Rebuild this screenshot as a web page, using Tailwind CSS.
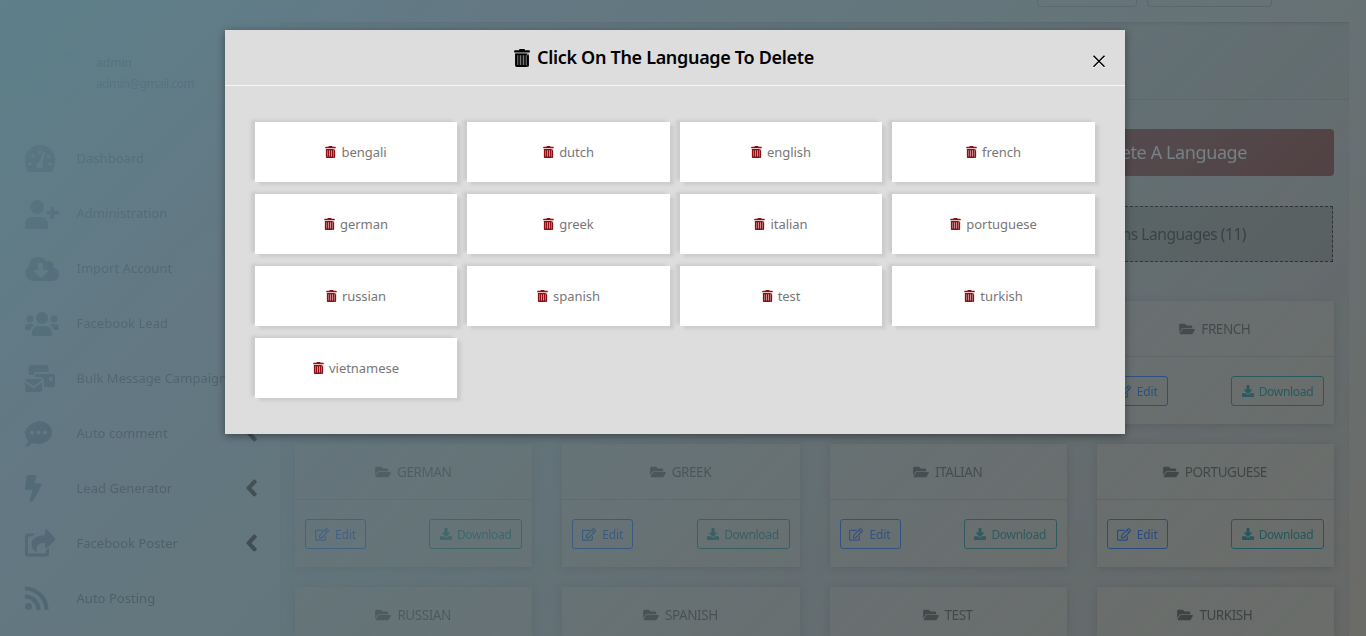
<!DOCTYPE html>
<html lang="en">
<head>
<meta charset="utf-8">
<title>Languages</title>
<script src="https://cdn.jsdelivr.net/npm/@tailwindcss/browser@4"></script>
</head>
<body class="relative h-[636px] w-[1366px] overflow-hidden bg-[linear-gradient(135deg,#5e808a_0%,#637883_25%,#64767c_48%,#677072_72%,#6b6b67_100%)] font-['Noto_Sans',sans-serif]">
<svg class="hidden">
  <symbol id="trash" viewBox="0 0 448 512"><path d="M0 84V56c0-13.300 10.700-24 24-24h112l9.400-18.700c4-8.200 12.300-13.300 21.400-13.300h114.300c9.100 0 17.400 5.100 21.500 13.300L312 32h112c13.300 0 24 10.700 24 24v28c0 6.600-5.400 12-12 12H12C5.400 96 0 90.600 0 84z"/><path d="M28 126h392v338c0 26.500-21.500 48-48 48H76c-26.500 0-48-21.500-48-48z" fill-opacity=".45"/><path d="M28 126h392v50H28zM28 126h60v386H76q-48 0-48-48zM420 126h-60v386h12q48 0 48-48zM76 452h296v60H76zM119 170h42v290h-42zM203 170h42v290h-42zM287 170h42v290h-42z"/></symbol>
  <symbol id="folder" viewBox="0 0 576 512"><path d="M572.694 292.093L500.270 416.248A63.997 63.997 0 0 1 444.989 448H45.025c-18.523 0-30.064-20.093-20.731-36.093l72.424-124.155A64 64 0 0 1 152 256h399.964c18.523 0 30.064 20.093 20.730 36.093zM152 224h328v-48c0-26.510-21.490-48-48-48H272l-64-64H48C21.490 64 0 85.490 0 112v278.046l69.077-118.418C86.214 242.250 117.989 224 152 224z"/></symbol>
  <symbol id="edit" viewBox="0 0 576 512"><path d="M402.300 344.900l32-32c5-5 13.700-1.500 13.700 5.700V464c0 26.500-21.500 48-48 48H48c-26.500 0-48-21.500-48-48V112c0-26.500 21.500-48 48-48h273.500c7.100 0 10.700 8.600 5.700 13.700l-32 32c-1.500 1.500-3.500 2.300-5.700 2.300H48v352h352V350.500c0-2.100.8-4.100 2.300-5.600zm156.600-201.800L296.300 405.700l-90.400 10c-26.200 2.900-48.500-19.200-45.600-45.600l10-90.400L432.900 17.100c22.900-22.900 59.900-22.900 82.700 0l43.200 43.200c22.900 22.900 22.900 60 .1 82.800zM460.100 174L402 115.900 216.200 301.800l-7.300 65.300 65.300-7.300L460.100 174zm64.800-79.700l-43.200-43.200c-4.100-4.100-10.800-4.100-14.800 0L436 82l58.100 58.100 30.900-30.900c4-4.200 4-10.800-.1-14.900z"/></symbol>
  <symbol id="download" viewBox="0 0 512 512"><path d="M216 0h80c13.300 0 24 10.700 24 24v168h87.700c17.800 0 26.700 21.500 14.100 34.100L269.700 378.300c-7.500 7.500-19.800 7.500-27.300 0L90.100 226.100c-12.600-12.600-3.700-34.100 14.100-34.100H192V24c0-13.300 10.700-24 24-24zm296 376v112c0 13.300-10.700 24-24 24H24c-13.300 0-24-10.700-24-24V376c0-13.300 10.700-24 24-24h146.700l49 49c20.100 20.100 52.500 20.100 72.600 0l49-49H488c13.300 0 24 10.700 24 24zm-124 88c0-11-9-20-20-20s-20 9-20 20 9 20 20 20 20-9 20-20zm64 0c0-11-9-20-20-20s-20 9-20 20 9 20 20 20 20-9 20-20z"/></symbol>
  <symbol id="chev" viewBox="0 0 320 512"><path d="M15 239L209 25c20-18 42-18 62 0l28 28c14 18 14 38 0 56L160 256l139 147c14 18 14 38 0 56l-28 28c-20 18-42 18-62 0L15 273c-10-10-10-24 0-34z"/></symbol>
</svg>

<div class="flex h-full w-full [mask-image:linear-gradient(135deg,rgba(0,0,0,0.07)_0%,rgba(0,0,0,0.38)_45%,rgba(0,0,0,0.85)_100%)]">
  <aside class="h-full w-[280px] shrink-0 text-[#20434f]">
    <div class="flex h-[131px] pt-[49px]">
      <div class="ml-[25px] size-[58px] rounded-full border-[14px] border-[#4d7a88]/20"></div>
      <div class="ml-[13px] pt-[3px] text-[12px] leading-[21px]">
        <div class="font-semibold tracking-[-0.3px]">admin</div>
        <div class="tracking-[-0.5px]">admin@gmail.com</div>
      </div>
    </div>
    <nav id="nav" class="text-[#1b2d34]"></nav>
  </aside>
  <main class="flex w-[1069px] shrink-0 flex-col">
    <div class="flex h-[22px] shrink-0 justify-end gap-[10px] pr-[77px]">
      <div class="h-[7px] w-[100px] rounded-b border border-t-0 border-black/20"></div>
      <div class="h-[7px] w-[125px] rounded-b border border-t-0 border-black/20"></div>
    </div>
    <div class="h-[614px] border-t border-black/15 bg-[#4e5a64]/20 shadow-[inset_0_2px_2px_rgba(0,0,0,.07)]">
      <div class="h-[77px] border-b border-black/10 bg-[#5c6260]/10"></div>
      <div class="flex flex-col pl-[15px] pr-[15px] pt-[29px]">
        <div class="flex justify-end">
          <div class="flex h-[47px] w-[505px] items-center justify-end rounded bg-[#3b1214]/75 pr-[87px] text-[18px] tracking-[-0.4px] text-[#848d90]">Delete A Language</div>
        </div>
        <div class="mr-px mt-[30px] flex h-[56px] items-center justify-end border border-dashed border-black/80 bg-[#3a423e]/40 pr-[86px] pt-px text-[15.500px] tracking-[-0.45px] text-[#1a2426]">Add-ons Languages (11)</div>
        <div id="cards" class="mt-[39px] grid grid-cols-4 gap-x-[30px] gap-y-5"></div>
      </div>
    </div>
  </main>
</div>

<section class="absolute left-[225px] top-[30px] h-[404px] w-[900px] bg-[#ddd] shadow-[0_2px_8px_rgba(0,0,0,.4)]">
  <header class="relative flex h-14 items-center justify-center border-b border-[#f6f6f6]">
    <svg class="mr-[7px] h-[18px] w-4"><use href="#trash"/></svg>
    <h5 class="pr-[22px] text-[18px] font-semibold tracking-[-0.32px] text-black">Click On The Language To Delete</h5>
    <svg class="absolute right-[19px] top-[24px] size-[14px]" viewBox="0 0 14 14" fill="none" stroke-width="1.500"><path stroke="#fff" d="M1.500 2.800l11 11M12.500 2.800l-11 11"/><path stroke="#000" d="M1.500 1.800l11 11M12.500 1.800l-11 11"/></svg>
  </header>
  <div id="langs" class="grid grid-cols-[202px_203px_202px_203px] gap-x-[10px] gap-y-3 px-[30px] pt-9"></div>
</section>

<script>
const nav = [
  ['Dashboard', 0, '<path d="M3 28Q0 22 0 16A15 15 0 0 1 30 16Q30 22 27 28Z"/><g fill="#637b86"><circle cx="5" cy="20" r="1.800"/><circle cx="8" cy="12" r="1.800"/><circle cx="15" cy="8" r="1.800"/><circle cx="25" cy="20" r="1.800"/><circle cx="23.500" cy="12.500" r="1.800"/><path d="M18 8l2.200.8-3 11q2 2 0 4.500h-5q-2-4 2-6z"/></g>'],
  ['Administration', 0, '<circle cx="12" cy="8" r="7"/><path d="M0 29v-3q0-8 8-8h8q7 0 7 8v3q0 1-1 1H1q-1 0-1-1zM26 8h3v4h5v3.500h-5v4.500h-3.500v-4.500H21.500V12H26z"/>'],
  ['Import Account', 0, '<path fill-rule="evenodd" d="M8 27a8 8 0 0 1-4-14.500Q4 3 13 3q6 0 8 4.500 4-2 7 2 1 1.500.3 4Q34 15 34 20.500 34 27 27 27zM13 10v6H9.500q-1 .5-.5 1.500l6 6q1 .8 2 0l6-6q.5-1-.5-1.500H18v-6q0-1-1-1h-3q-1 0-1 1z"/>'],
  ['Facebook Lead', 0, '<circle cx="17" cy="9" r="6"/><circle cx="5" cy="10" r="3.400"/><circle cx="29" cy="10" r="3.400"/><path d="M7 26v-1q0-8 7-8h6q7 0 7 8v1q0 1-2 1H9q-2 0-2-1zM0 21v-2q0-4 4-4h3l2 1q-3 2-4 5zM34 21v-2q0-4-4-4h-3l-2 1q3 2 4 5z"/>'],
  ['Bulk Message Campaign', 1, '<path d="M3.500 8V3q0-2 2-2h16q2 0 2 2v5H11q-2 0-2 3H3.500z"/><path fill-rule="evenodd" d="M11 10h17q2 0 2 2v9q0 2-2 2h-9v-6q0-3-3-4h-6v-1q0-2 1-2zM24 13v4h3.500v-4z"/><path d="M0 16q0-1 2-1h13q2 0 2 1L8.500 22zM0 18.500l8.500 6 8.500-6V26q0 2-2 2H2q-2 0-2-2z"/>'],
  ['Auto comment', 1, '<path fill-rule="evenodd" d="M13.500 2C21 2 27 7 27 13.500S21 25 13.500 25q-3 0-6-1Q4 28 0 27.500q2-2 3-6Q0 18 0 13.500 0 7 13.500 2zM7 11.500a2 2 0 1 0 .1 4a2 2 0 1 0-.1-4zM13.500 11.500a2 2 0 1 0 .1 4a2 2 0 1 0-.1-4zM20 11.500a2 2 0 1 0 .1 4a2 2 0 1 0-.1-4z"/>'],
  ['Lead Generator', 1, '<path d="M3 1h7q1.500 0 1.200 1.500L9.500 9.500h6q1.500.5 1 2L8 27q-1 1.500-2.500.8-.8-.5-.5-2l2.500-10H1.500Q0 16 0 14.500L1.500 2.500Q1.800 1 3 1z"/>'],
  ['Facebook Poster', 1, '<path d="M10 4.500H3Q0 4.500 0 7.500v17q0 3 3 3h18q3 0 3-3V19l-3 2v3.500H3v-17h4zM20 1.500v4.700Q7 7 6.500 14.500q0 6 4.500 8.500 1 .3.800-.7Q10 14 20 14v4q.5 2 2 .8l8-7.500q1-1 0-2L22 .7q-2-1-2 .8z"/>'],
  ['Auto Posting', 0, '<circle cx="3.500" cy="22.500" r="3.500"/><path fill="none" stroke="currentColor" stroke-width="4.200" d="M0 12.500a13.500 13.500 0 0 1 13.500 13.500M0 4.500a21.500 21.500 0 0 1 21.500 21.500"/>']
];
document.getElementById('nav').innerHTML = nav.map(([t, c, p]) =>
 `<div class="flex h-[55px] items-center pl-[25px] pr-[22px]"><svg class="h-[30px] w-[34px] shrink-0 text-[#244554]" fill="currentColor" viewBox="0 0 34 30">${p}</svg><span class="ml-[17.500px] flex-1 whitespace-nowrap pt-px text-[13px] tracking-[0.03px]">${t}</span>${c ? '<svg class="-mt-px h-[18px] w-[13px] shrink-0 fill-black"><use href="#chev"/></svg>' : ''}</div>`).join('');
document.getElementById('cards').innerHTML = ['BENGALI','DUTCH','ENGLISH','FRENCH','GERMAN','GREEK','ITALIAN','PORTUGUESE','RUSSIAN','SPANISH','TEST','TURKISH'].map((t, i) =>
 `<div class="${i < 8 ? 'h-[123px]' : 'h-[49px]'} bg-[#73756e]/45 shadow-[0_1px_8px_rgba(0,0,0,.18)]"><div class="flex h-14 items-center justify-center border-b ${i < 8 ? 'border-black/12' : 'border-transparent'} pr-px text-[13.500px] tracking-[-0.45px] text-[#303739]"><svg class="mr-[6px] h-[14px] w-4 fill-current"><use href="#folder"/></svg><span class="pt-px">${t}</span></div>
 ${i < 8 ? '<div class="flex justify-between px-[10px] pt-[19px] text-[12px] tracking-[-0.1px]"><div class="flex h-[30px] w-[61px] items-center justify-center rounded-[3px] border border-[#0e3f88] text-[#0e3f88]"><svg class="mr-[6px] h-[13px] w-[14px] fill-current"><use href="#edit"/></svg><span class="pt-px">Edit</span></div><div class="flex h-[30px] w-[93px] items-center justify-center rounded-[3px] border border-[#0f5157] text-[#0f5157]"><svg class="mr-[5px] size-3 shrink-0 fill-current"><use href="#download"/></svg><span class="pt-px tracking-[-0.3px]">Download</span></div></div>' : ''}</div>`).join('');
document.getElementById('langs').innerHTML = ['bengali','dutch','english','french','german','greek','italian','portuguese','russian','spanish','test','turkish','vietnamese'].map(t =>
 `<div class="flex h-[60px] items-center justify-center bg-white text-[13px] tracking-[-0.05px] text-[#777] shadow-[4px_3px_3px_#ccc,-4px_-2px_3px_#ccc]"><svg class="mr-[5px] h-3 w-[11px] fill-[#8b0f14]"><use href="#trash"/></svg><span class="pt-px">${t}</span></div>`).join('');
</script>
</body>
</html>
